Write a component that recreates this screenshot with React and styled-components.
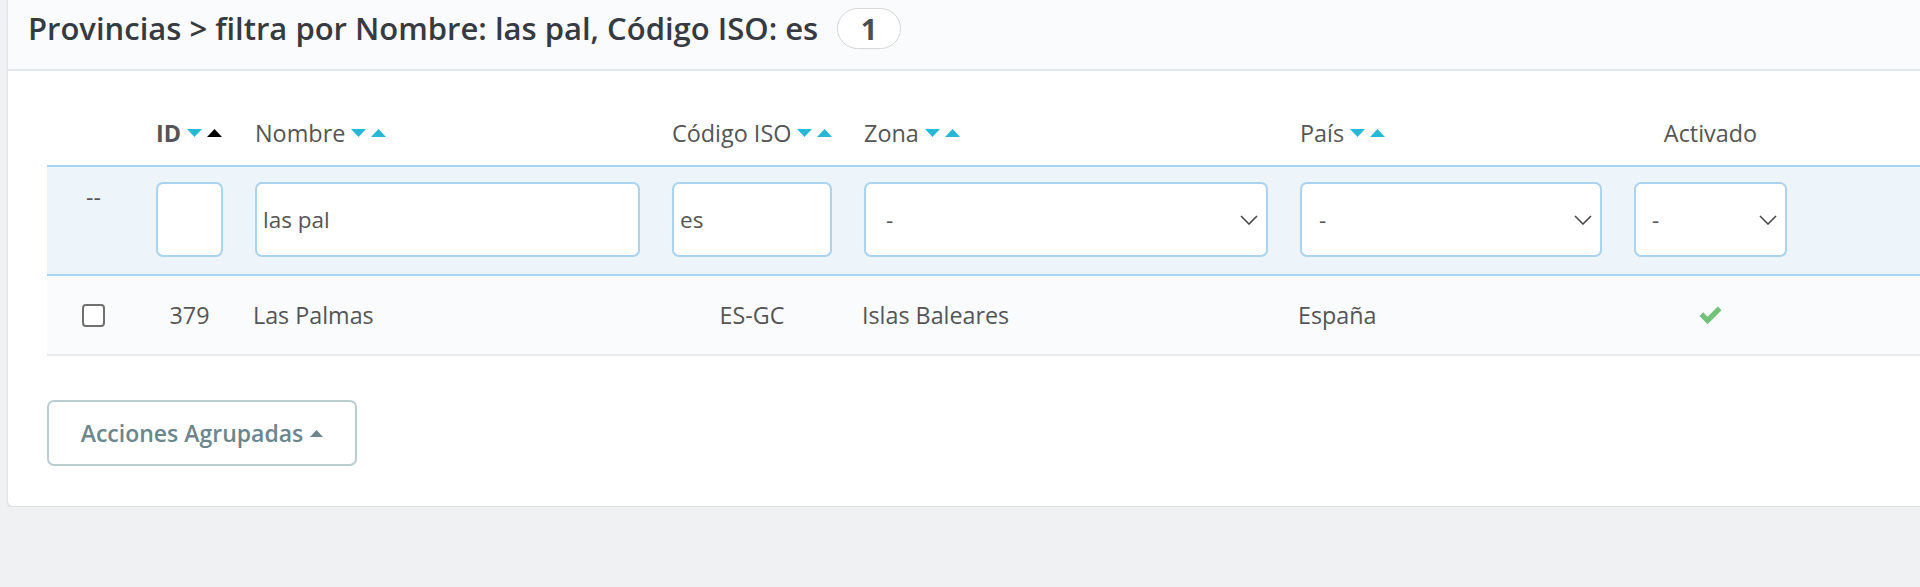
import React from "react";
import styled, { createGlobalStyle } from "styled-components";

const GlobalStyle = createGlobalStyle`
  html, body { margin: 0; padding: 0; }
  body {
    background: #eff1f2;
    font-family: "Open Sans", "Noto Sans", sans-serif;
    overflow: hidden;
  }
  * { box-sizing: border-box; }
`;

const COLS = "93px 99px 417px 192px 436px 334px 185px 1fr";

const Page = styled.div`
  padding-left: 7px;
  width: 1920px;
`;

const Panel = styled.section`
  background: #fff;
  border-left: 1px solid #dde5e8;
  border-bottom: 1px solid #d8e1e4;
  border-bottom-left-radius: 6px;
  box-shadow: 0 2px 3px rgba(0, 0, 0, 0.05);
  padding-bottom: 40px;
`;

const Heading = styled.header`
  height: 71px;
  background: #fafbfc;
  border-bottom: 2px solid #e0e9eb;
  display: flex;
  align-items: flex-start;
  padding: 8px 0 0 20px;
`;

const Title = styled.h1`
  margin: 0;
  height: 40px;
  line-height: 40px;
  font-size: 31px;
  font-weight: 600;
  color: #363a41;
`;

const Badge = styled.span`
  margin-left: 19px;
  height: 41px;
  min-width: 64px;
  border: 1px solid #d6d6d6;
  border-radius: 21px;
  background: #fff;
  display: flex;
  align-items: center;
  justify-content: center;
  font-size: 29px;
  font-weight: 700;
  color: #4a4d52;
`;

const Body = styled.div`
  padding: 30px 0 0 39px;
`;

const Row = styled.div`
  display: grid;
  grid-template-columns: ${COLS};
  background: ${(p) => p.$bg || "transparent"};
  border-top: ${(p) => (p.$borderTop ? `2px solid ${p.$borderTop}` : "none")};
  border-bottom: ${(p) =>
    p.$borderBottom ? `2px solid ${p.$borderBottom}` : "none"};
  min-height: ${(p) => p.$minHeight || "auto"};
  align-items: ${(p) => p.$align || "stretch"};
`;

const HeadCell = styled.div`
  padding: 17px 16px;
  display: flex;
  align-items: center;
  justify-content: ${(p) => (p.$center ? "center" : "flex-start")};
  font-size: 23.4px;
  line-height: 30px;
  color: #555;
  font-weight: ${(p) => (p.$bold ? 700 : 400)};
  white-space: nowrap;
`;

const SortIcons = styled.span`
  display: inline-flex;
  align-items: center;
  gap: 5px;
  margin-left: 6px;
`;

const FilterCell = styled.div`
  padding: 15px 16px 17px;
  font-size: 23px;
  line-height: 30px;
  color: #555;
  text-align: ${(p) => (p.$center ? "center" : "left")};
`;

const TextInput = styled.input`
  display: block;
  width: 100%;
  height: 75px;
  border: 2px solid #a9d3ee;
  border-radius: 7px;
  background: #fff;
  font-family: inherit;
  font-size: 22.5px;
  color: #555;
  padding: 0 6px;
  outline: none;
`;

const SelectBox = styled.div`
  height: 75px;
  border: 2px solid #a9d3ee;
  border-radius: 7px;
  background: #fff;
  display: flex;
  align-items: center;
  justify-content: space-between;
  padding: 0 8px 0 ${(p) => p.$padLeft || 19}px;
  font-size: 22.5px;
  color: #555;
`;

const DataCell = styled.div`
  padding: 0 ${(p) => (p.$tight ? 14 : 16)}px;
  font-size: 23.3px;
  line-height: 30px;
  color: #555;
  display: flex;
  align-items: center;
  justify-content: ${(p) => (p.$center ? "center" : "flex-start")};
`;

const Checkbox = styled.span`
  width: 23px;
  height: 23px;
  border: 2px solid #707070;
  border-radius: 4px;
  background: #fff;
  display: block;
`;

const Footer = styled.div`
  padding: 44px 0 0 39px;
`;

const BulkButton = styled.button`
  width: 310px;
  height: 66px;
  border: 2px solid #bbcdd2;
  border-radius: 7px;
  background: #fff;
  color: #6c868e;
  font-family: inherit;
  font-size: 23px;
  font-weight: 600;
  display: flex;
  align-items: center;
  justify-content: center;
  gap: 7px;
  padding: 0;
`;

const Down = ({ color = "#25b9d7" }) => (
  <svg width="15" height="8" viewBox="0 0 15 8">
    <polygon points="0,0 15,0 7.5,8" fill={color} />
  </svg>
);
const Up = ({ color = "#25b9d7", w = 15, h = 8 }) => (
  <svg width={w} height={h} viewBox={`0 0 ${w} ${h}`}>
    <polygon points={`0,${h} ${w},${h} ${w / 2},0`} fill={color} />
  </svg>
);

const Chevron = () => (
  <svg width="18" height="10" viewBox="0 0 18 10">
    <polyline
      points="1,1 9,9 17,1"
      fill="none"
      stroke="#4a4a4a"
      strokeWidth="1.6"
    />
  </svg>
);

const Check = () => (
  <svg width="23" height="19" viewBox="0 0 22 18">
    <path d="M0.5 9.5 L4 6 L8.2 10.3 L18 0.5 L21.5 4 L8.2 17.4 Z" fill="#72c279" />
  </svg>
);

const Sort = ({ active }) => (
  <SortIcons>
    <Down />
    <Up color={active ? "#000" : "#25b9d7"} />
  </SortIcons>
);

export default function App() {
  return (
    <>
      <GlobalStyle />
      <Page>
        <Panel>
          <Heading>
            <Title>Provincias &gt; filtra por Nombre: las pal, Código ISO: es</Title>
            <Badge>1</Badge>
          </Heading>
          <Body>
            <Row>
              <HeadCell />
              <HeadCell $bold>
                ID
                <Sort active />
              </HeadCell>
              <HeadCell>
                Nombre
                <Sort />
              </HeadCell>
              <HeadCell>
                Código ISO
                <Sort />
              </HeadCell>
              <HeadCell>
                Zona
                <Sort />
              </HeadCell>
              <HeadCell>
                País
                <Sort />
              </HeadCell>
              <HeadCell $center>Activado</HeadCell>
              <HeadCell />
            </Row>
            <Row $bg="#edf5fb" $borderTop="#a6d5ef" $borderBottom="#a6d5ef">
              <FilterCell $center>--</FilterCell>
              <FilterCell>
                <TextInput defaultValue="" />
              </FilterCell>
              <FilterCell>
                <TextInput defaultValue="las pal" />
              </FilterCell>
              <FilterCell>
                <TextInput defaultValue="es" />
              </FilterCell>
              <FilterCell>
                <SelectBox $padLeft={20}>
                  <span>-</span>
                  <Chevron />
                </SelectBox>
              </FilterCell>
              <FilterCell>
                <SelectBox $padLeft={17}>
                  <span>-</span>
                  <Chevron />
                </SelectBox>
              </FilterCell>
              <FilterCell>
                <SelectBox $padLeft={16}>
                  <span>-</span>
                  <Chevron />
                </SelectBox>
              </FilterCell>
              <FilterCell />
            </Row>
            <Row $bg="#fafbfd" $borderBottom="#e6ecef" $minHeight="80px">
              <DataCell $center>
                <Checkbox />
              </DataCell>
              <DataCell $center>379</DataCell>
              <DataCell $tight>Las Palmas</DataCell>
              <DataCell $center>ES-GC</DataCell>
              <DataCell $tight>Islas Baleares</DataCell>
              <DataCell $tight>España</DataCell>
              <DataCell $center>
                <Check />
              </DataCell>
              <DataCell />
            </Row>
          </Body>
          <Footer>
            <BulkButton>
              Acciones Agrupadas
              <Up color="#6c868e" w={13} h={7} />
            </BulkButton>
          </Footer>
        </Panel>
      </Page>
    </>
  );
}
